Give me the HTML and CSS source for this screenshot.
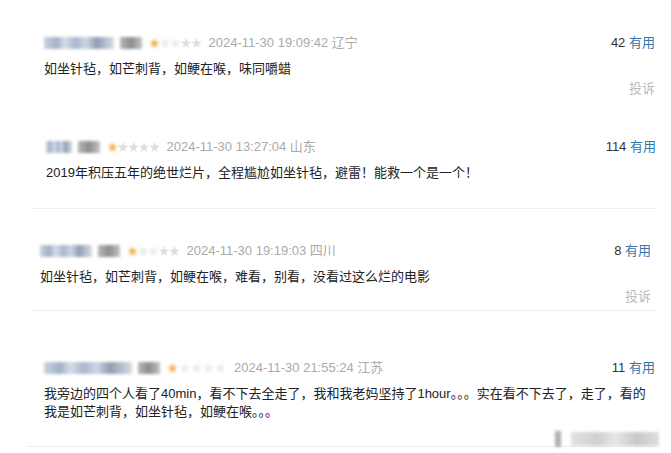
FILE: index.html
```html
<!DOCTYPE html>
<html lang="zh-CN">
<head>
  <meta charset="UTF-8" />
  <meta name="viewport" content="width=device-width, initial-scale=1.0" />
  <title>短评</title>
  <link rel="stylesheet" href="styles.css">
</head>
<body>
  <div class="comments">
    <div class="comment c1">
      <div class="head">
        <span class="user">
          <span class="blur name n-long"></span>
          <span class="blur badge"></span>
        </span>
        <span class="stars"><span class="blur-stars"><span class="on">★</span>★★</span>★★</span>
        <span class="time">2024-11-30 19:09:42 辽宁</span>
        <span class="votes"><span class="count">42</span> <a href="#">有用</a></span>
      </div>
      <p class="text">如坐针毡，如芒刺背，如鲠在喉，味同嚼蜡</p>
      <div class="report">投诉</div>
    </div>

    <div class="comment c2">
      <div class="head">
        <span class="user">
          <span class="blur name n-short"></span>
          <span class="blur badge"></span>
        </span>
        <span class="stars"><span class="blur-stars"><span class="on">★</span></span>★★★★</span>
        <span class="time">2024-11-30 13:27:04 山东</span>
        <span class="votes"><span class="count">114</span> <a href="#">有用</a></span>
      </div>
      <p class="text">2019年积压五年的绝世烂片，全程尴尬如坐针毡，避雷！能救一个是一个！</p>
    </div>

    <div class="comment c3">
      <div class="head">
        <span class="user">
          <span class="blur name n-mid"></span>
          <span class="blur badge"></span>
        </span>
        <span class="stars"><span class="blur-stars"><span class="on">★</span>★★</span>★★</span>
        <span class="time">2024-11-30 19:19:03 四川</span>
        <span class="votes"><span class="count">8</span> <a href="#">有用</a></span>
      </div>
      <p class="text">如坐针毡，如芒刺背，如鲠在喉，难看，别看，没看过这么烂的电影</p>
      <div class="report">投诉</div>
    </div>

    <div class="comment c4">
      <div class="head">
        <span class="user">
          <span class="blur name n-xlong"></span>
          <span class="blur badge"></span>
        </span>
        <span class="stars wide"><span class="blur-stars"><span class="on">★</span>★★★★</span></span>
        <span class="time">2024-11-30 21:55:24 江苏</span>
        <span class="votes"><span class="count">11</span> <a href="#">有用</a></span>
      </div>
      <p class="text">我旁边的四个人看了40min，看不下去全走了，我和我老妈坚持了1hour。。。实在看不下去了，走了，看的我是如芒刺背，如坐针毡，如鲠在喉。。。</p>
    </div>
  </div>

  <div class="watermark">
    <span class="wm-mark"></span>
    <span class="wm-text"></span>
  </div>
</body>
</html>
```

FILE: styles.css
```css
body {
  margin: 0;
  background: #fff;
  color: #222;
  font-family: "Liberation Sans", "Noto Sans CJK SC", sans-serif;
  font-size: 13px;
}

.comments {
  position: relative;
}

.comment {
  margin: 0 15px 0 32px;
}

.c1 {
  padding: 33px 1px 0 12px;
}

.c2 {
  padding: 39px 0 26px 14px;
  border-bottom: 1px solid #eee;
}

.c3 {
  padding: 32px 5px 4px 8px;
  border-bottom: 1px solid #eee;
}

.c4 {
  margin-left: 27px;
  margin-right: 11px;
  padding: 47px 5px 25px 17px;
  border-bottom: 1px solid #eee;
}

.head {
  display: flex;
  align-items: center;
  height: 20px;
  line-height: 20px;
}

.user {
  display: flex;
  align-items: center;
  gap: 6px;
}

.blur {
  display: inline-block;
  height: 12px;
  filter: blur(1.4px);
}

.name {
  background: linear-gradient(90deg, #c9d3e0 0%, #9fb1c9 18%, #d7dde6 30%, #a8b7cc 45%, #cfd6e0 60%, #8f9db2 75%, #d8dde4 100%);
}

.n-xlong { width: 88px; }
.n-long { width: 70px; }
.n-mid { width: 52px; }
.n-short { width: 26px; }

.badge {
  width: 22px;
  background: linear-gradient(90deg, #b7b7b7, #8c8c8c 50%, #c4c4c4);
}

.stars {
  margin-left: 7px;
  color: #ddd;
  font-size: 11px;
  letter-spacing: -0.5px;
}

.stars.wide {
  letter-spacing: 1px;
}

.blur-stars {
  filter: blur(1.4px);
  color: #e8e8e8;
}

.blur-stars .on {
  color: #f2a93b;
}

.time {
  margin-left: 7px;
  color: #aaa;
}

.votes {
  margin-left: auto;
  color: #333;
}

.votes a {
  color: #37a;
  text-decoration: none;
}

.text {
  margin: 7px 0 0;
  line-height: 18px;
}

.report {
  margin-top: 2px;
  text-align: right;
  line-height: 18px;
  color: #bbb;
}

.watermark {
  position: absolute;
  right: 12px;
  top: 431px;
  display: flex;
  align-items: center;
  gap: 10px;
  filter: blur(1.5px);
}

.wm-mark {
  width: 6px;
  height: 16px;
  background: #b0b0b0;
}

.wm-text {
  width: 88px;
  height: 14px;
  background: linear-gradient(90deg, #e2e2e2, #cfcfcf 30%, #e6e6e6 50%, #c8c8c8 75%, #dedede);
}
```
